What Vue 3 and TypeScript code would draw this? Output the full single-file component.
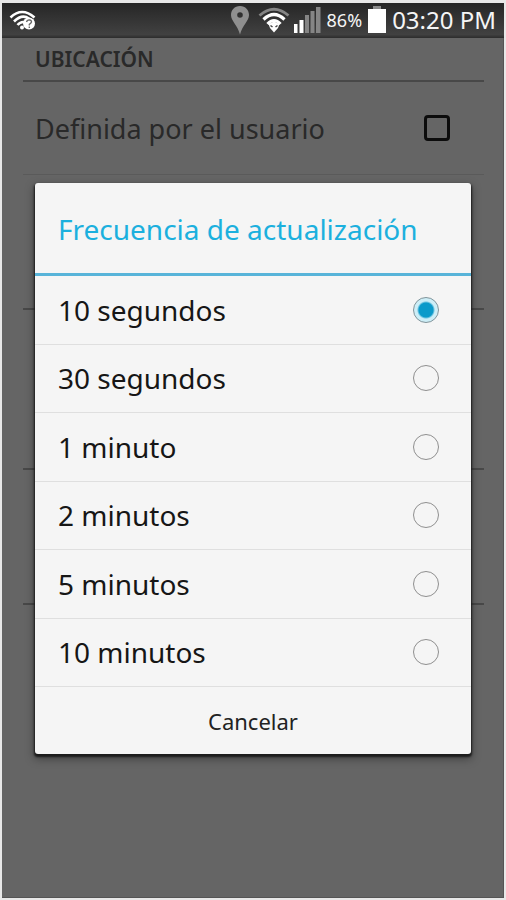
<script setup lang="ts">
import { ref } from 'vue'

interface Option {
  value: number
  label: string
}

const options: Option[] = [
  { value: 10, label: '10 segundos' },
  { value: 30, label: '30 segundos' },
  { value: 60, label: '1 minuto' },
  { value: 120, label: '2 minutos' },
  { value: 300, label: '5 minutos' },
  { value: 600, label: '10 minutos' },
]

const selected = ref<number>(10)
const userDefined = ref<boolean>(false)
const open = ref<boolean>(true)
</script>

<template>
  <div class="screen">
    <header class="status">
      <svg class="wifi-help" viewBox="0 0 28 22" width="28" height="22" aria-hidden="true">
        <g fill="none" stroke="#fff" stroke-width="2.6">
          <path d="M1.500 8.500Q13 -2.500 25.500 8.500" />
          <path d="M5 12.500Q13 4.500 20 9.500" />
          <path d="M8.500 16Q11.500 12.500 15 13" />
        </g>
        <circle cx="13" cy="18.500" r="2" fill="#fff" />
        <circle cx="20" cy="14.500" r="6" fill="#fff" />
        <path d="M17.500 13Q18 10.800 20.300 10.800Q22.700 11.200 22.500 13Q22 14.500 20.300 15.300V16.500M20.300 17.500V19" fill="none" stroke="#666" stroke-width="1.300" />
      </svg>
      <div class="indicators">
        <svg viewBox="0 0 20 30" width="20" height="30" aria-hidden="true">
          <path fill="#8f8f8f" fill-rule="evenodd" d="M10 1C4.500 1 1 5 1 10C1 16 7.500 20 10 29.500C12.500 20 19 16 19 10C19 5 15.500 1 10 1ZM10 7.200A2.800 2.800 0 1 1 10 12.800A2.800 2.800 0 1 1 10 7.200Z" />
        </svg>
        <svg class="wifi" viewBox="0 0 32 26" width="32" height="26" aria-hidden="true">
          <path d="M1.500 8.500Q16 -4 30.500 8.500" fill="none" stroke="#858585" stroke-width="2.800" />
          <g fill="none" stroke="#fff" stroke-width="3.200">
            <path d="M5.500 12.500Q16 2.500 26.500 12.500" />
            <path d="M9.500 17Q16 10 22.500 17" />
          </g>
          <path d="M10.500 17L16 14.500L21.500 17L20 21L16 25.500L12 21Z" fill="#fff" />
          <path d="M12.500 18.500L14.500 20M19.500 18.500L17.500 20" stroke="#444" stroke-width="1.500" />
        </svg>
        <svg class="signal" viewBox="0 0 27 28" width="27" height="28" aria-hidden="true">
          <path fill="#fff" d="M0 18H3.500V27H0ZM5.500 14H9.500V27H5.500Z" />
          <path fill="#858585" d="M11 9H15V27H11ZM16.500 5H20.500V27H16.500ZM22 1H26.500V27H22Z" />
        </svg>
        <span class="percent">86%</span>
        <svg class="battery" viewBox="0 0 18 28" width="18" height="28" aria-hidden="true">
          <path fill="#8a8a8a" d="M5 0H13V4H5Z" />
          <path fill="#fff" d="M0 3H18V27H0Z" />
        </svg>
        <span class="clock">03:20 PM</span>
      </div>
    </header>

    <main class="content">
      <section class="settings">
        <h2>UBICACIÓN</h2>
        <label class="setting">
          <span>Definida por el usuario</span>
          <input v-model="userDefined" type="checkbox" />
        </label>
        <div class="slot"></div>
        <div class="slot tall"></div>
        <div class="slot"></div>
      </section>

      <div v-if="open" class="overlay">
        <form class="dialog" role="dialog" aria-labelledby="dialog-title" @submit.prevent="open = false">
          <h1 id="dialog-title">Frecuencia de actualización</h1>
          <div class="options">
            <label v-for="option in options" :key="option.value" class="option">
              <span>{{ option.label }}</span>
              <input v-model="selected" type="radio" name="frequency" :value="option.value" />
            </label>
          </div>
          <button type="button" class="cancel" @click="open = false">Cancelar</button>
        </form>
      </div>
    </main>
  </div>
</template>

<style>
body {
  background: #e8e8e8;
}
</style>

<style scoped>
.screen {
  box-sizing: border-box;
  min-height: 100vh;
  padding: 3px 2px 2px;
  display: flex;
  flex-direction: column;
  font-family: "Noto Sans", "Open Sans", sans-serif;
}

.status {
  box-sizing: border-box;
  height: 35px;
  display: flex;
  align-items: center;
  justify-content: space-between;
  padding: 0 8px 2px 7px;
  background: linear-gradient(#262626, #414141 90%, #2c2c2c);
  color: #f5f5f5;
}

.indicators {
  display: flex;
  align-items: center;
}

.wifi {
  margin-left: 8px;
}

.signal {
  margin-left: 4px;
}

.percent {
  margin-left: 6px;
  font-size: 18px;
}

.battery {
  margin: 0 6px;
}

.clock {
  font-size: 24px;
}

.content {
  position: relative;
  flex: 1;
  box-sizing: border-box;
  padding: 0 19px 0 21px;
  background: #656565;
  border: solid #555;
  border-width: 0 1px 1px 0;
}

h2 {
  margin: 0;
  padding: 5px 12px;
  font-size: 21px;
  line-height: 32px;
  font-weight: 600;
  color: #292929;
  border-bottom: 2px solid #484848;
}

.setting {
  height: 92px;
  display: flex;
  align-items: center;
  justify-content: space-between;
  padding: 0 34px 0 12px;
  font-size: 27px;
  color: #292929;
  border-bottom: 1px solid #5a5a5a;
}

.setting input {
  appearance: none;
  box-sizing: border-box;
  width: 26px;
  height: 26px;
  margin: 0;
  border: 3px solid #0c0c0c;
  border-radius: 4px;
}

.setting input:checked {
  background: #0c0c0c;
}

.slot {
  height: 133px;
  border-bottom: 2px solid #484848;
}

.slot.tall {
  height: 158px;
}

.overlay {
  position: absolute;
  inset: 0;
  display: flex;
  align-items: center;
  padding: 2px 32px 0 33px;
}

.dialog {
  flex: 1;
  overflow: hidden;
  border-radius: 3px;
  background: #f5f5f5;
  box-shadow: 0 2px 2px 1px #1c1c1c, 0 4px 10px 1px rgba(0, 0, 0, 0.35);
}

h1 {
  margin: 0;
  padding: 2px 23px 0;
  font-size: 28px;
  line-height: 88px;
  font-weight: 400;
  color: #1cb0de;
  white-space: nowrap;
  border-bottom: 3px solid #58b4d9;
}

.options {
  display: grid;
  grid-auto-rows: 1fr;
  min-height: 411px;
}

.option {
  display: flex;
  align-items: center;
  justify-content: space-between;
  padding: 0 32px 0 23px;
  font-size: 28px;
  color: #161616;
  border-bottom: 1px solid #dfdfdf;
}

.option input {
  appearance: none;
  box-sizing: border-box;
  width: 26px;
  height: 26px;
  margin: 0;
  border: 1px solid #8f8f8f;
  border-radius: 50%;
}

.option input:checked {
  border-color: #80949b;
  background: radial-gradient(circle, #0a9aca 7px, #cdeef7 9px);
}

.cancel {
  display: block;
  width: 100%;
  height: 67px;
  padding: 0;
  border: 0;
  background: transparent;
  font-family: inherit;
  font-size: 22px;
  color: #222;
}
</style>
